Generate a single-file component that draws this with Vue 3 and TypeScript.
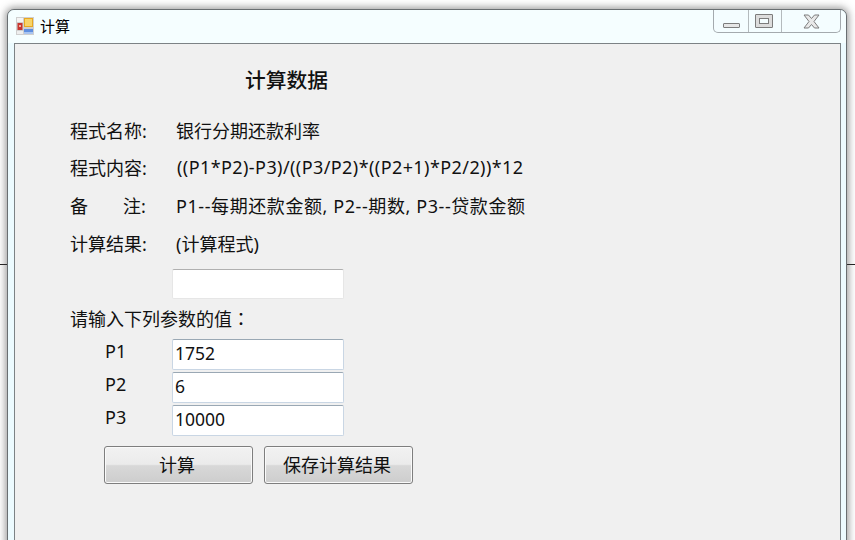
<script setup lang="ts">
const infoRows = [
  { label: '程式名称:', value: '银行分期还款利率', cls: '' },
  { label: '程式内容:', value: '((P1*P2)-P3)/((P3/P2)*((P2+1)*P2/2))*12', cls: 'track' },
  { label: '备注:', value: 'P1--每期还款金额, P2--期数, P3--贷款金额', cls: 'track-wide', spread: true },
  { label: '计算结果:', value: '(计算程式)', cls: '' },
]

const params = [
  { name: 'P1', value: '1752' },
  { name: 'P2', value: '6' },
  { name: 'P3', value: '10000' },
]
</script>

<template>
  <div class="desktop">
    <div class="back-line"></div>
    <div class="window">
      <div class="titlebar">
        <svg class="app-icon" width="18" height="18" viewBox="0 0 18 18">
          <rect x="0" y="0" width="18" height="18" fill="#cfcfcf" />
          <rect x="1" y="1" width="6" height="4" fill="#f4f4f4" />
          <rect x="1.5" y="6" width="5" height="7" fill="#c8352f" />
          <rect x="3" y="8" width="2" height="2" fill="#f0b0a0" />
          <rect x="1" y="14" width="6" height="3" fill="#eeeeee" />
          <rect x="8" y="1" width="9" height="9" fill="#e8a820" />
          <rect x="9" y="2" width="7" height="7" fill="#f8d468" />
          <rect x="8" y="12" width="9" height="5" fill="#5f8fe0" />
          <rect x="8" y="15" width="9" height="2" fill="#a8c4f0" />
        </svg>
        <span class="title">计算</span>
        <div class="controls">
          <div class="ctl ctl-min"><span class="min-glyph"></span></div>
          <div class="ctl ctl-max"><span class="max-glyph"></span></div>
          <div class="ctl ctl-close">
            <svg width="17" height="15" viewBox="0 0 17 15">
              <path
                d="M1 1H5.5L8.5 4.5L11.5 1H16L11 7.5L16 14H11.5L8.5 10.5L5.5 14H1L6 7.5Z"
                fill="#e8e8e8"
                stroke="#7c7c7c"
                stroke-width="1"
              />
            </svg>
          </div>
        </div>
      </div>

      <div class="client">
        <h1 class="heading">计算数据</h1>

        <div class="info">
          <div v-for="row in infoRows" :key="row.label" class="info-row">
            <span class="info-label" :class="{ spread: row.spread }">
              <template v-if="row.spread"><span>备</span><span>注:</span></template>
              <template v-else>{{ row.label }}</template>
            </span>
            <span class="info-value" :class="row.cls">{{ row.value }}</span>
          </div>
        </div>

        <div class="result-row">
          <div class="field field-plain"></div>
        </div>

        <div class="prompt">请输入下列参数的值<span class="colon">：</span></div>

        <div class="params">
          <div v-for="p in params" :key="p.name" class="param-row">
            <span class="param-name">{{ p.name }}</span>
            <div class="field">{{ p.value }}</div>
          </div>
        </div>

        <div class="actions">
          <button class="btn" type="button">计算</button>
          <button class="btn" type="button">保存计算结果</button>
        </div>
      </div>
    </div>
  </div>
</template>

<style>
html,
body {
  margin: 0;
  background: #ffffff;
}
</style>

<style scoped>
.desktop {
  position: relative;
  width: 855px;
  height: 540px;
  overflow: hidden;
  background: #ffffff;
  padding: 9px 8px 0 7px;
  box-sizing: border-box;
  font-family: 'Noto Sans', 'Noto Sans CJK SC', sans-serif;
  color: #111111;
}

.back-line {
  position: absolute;
  left: 0;
  right: 0;
  top: 264px;
  height: 1px;
  background: #222222;
}

.window {
  position: relative;
  height: 560px;
  box-sizing: border-box;
  border: 1px solid #6a6f72;
  border-radius: 7px 7px 0 0;
  background: #ecfbff;
  box-shadow: 0 0 7px 2px rgba(70, 70, 70, 0.5);
  padding: 0 5px 0 6px;
}

.titlebar {
  display: flex;
  align-items: flex-start;
  height: 33px;
  background: #f5feff;
  margin: 0 -5px 0 -6px;
  padding: 0 5px 0 8px;
  border-radius: 7px 7px 0 0;
}

.app-icon {
  margin-top: 7px;
}

.title {
  margin: 6px 0 0 6px;
  font-size: 15px;
  line-height: 20px;
  color: #000000;
}

.controls {
  display: flex;
  height: 22px;
  margin: 0 0 0 auto;
  border: 1px solid #a4aaae;
  border-top: none;
  border-radius: 0 0 5px 5px;
  background: #f4fdff;
}

.ctl {
  display: flex;
  align-items: center;
  justify-content: center;
  box-sizing: border-box;
  border-left: 1px solid #b4babd;
}

.ctl:first-child {
  border-left: none;
}

.ctl-min {
  width: 34px;
}

.ctl-max {
  width: 33px;
}

.ctl-close {
  width: 59px;
}

.min-glyph {
  display: block;
  box-sizing: border-box;
  width: 17px;
  height: 5px;
  margin-top: 8px;
  border: 1px solid #7c7c7c;
  border-radius: 1px;
  background: #e6e6e6;
}

.max-glyph {
  display: block;
  box-sizing: border-box;
  width: 18px;
  height: 14px;
  margin-left: -2px;
  border: 4px solid #dcdcdc;
  outline: 1px solid #7c7c7c;
  outline-offset: -1px;
  box-shadow: inset 0 0 0 1px #7c7c7c;
  border-radius: 1px;
  background: #f4fdff;
}

.client {
  height: 520px;
  box-sizing: border-box;
  border: 1px solid #7c8285;
  background: #f0f0f0;
  padding: 0 0 0 55px;
}

.heading {
  margin: 0;
  padding: 21px 0 0 175px;
  font-size: 20.75px;
  line-height: 30px;
  font-weight: 500;
  color: #111111;
}

.info {
  margin-top: 16px;
}

.info-row {
  display: flex;
  align-items: center;
  height: 37.6px;
  font-size: 18px;
}

.info-label {
  display: flex;
  width: 106px;
  flex: none;
}

.info-label.spread span:first-child {
  width: 53px;
}

.info-value {
  white-space: nowrap;
}

.track {
  margin-left: 1px;
  letter-spacing: 0.42px;
}

.track-wide {
  letter-spacing: 0.58px;
}

.result-row {
  padding: 8px 0 0 102px;
}

.field {
  box-sizing: border-box;
  width: 172px;
  height: 31px;
  border: 1px solid #c9d6e4;
  border-top-color: #9aa8b4;
  border-radius: 2px;
  background: #ffffff;
  padding-left: 2px;
  font-size: 17.5px;
  line-height: 27px;
}

.field-plain {
  height: 30px;
  border-color: #e6e6e6;
  border-top-color: #b0b0b0;
}

.prompt {
  height: 40px;
  font-size: 18px;
  line-height: 38px;
}

.colon {
  font-family: 'Noto Sans CJK TC', sans-serif;
}

.params {
  display: flex;
  flex-direction: column;
  gap: 2px;
}

.param-row {
  display: flex;
  align-items: flex-start;
  padding-left: 35px;
}

.param-name {
  width: 67px;
  font-size: 18px;
  line-height: 24px;
}

.actions {
  display: flex;
  gap: 11px;
  padding: 10px 0 0 34px;
}

.btn {
  width: 149px;
  height: 38px;
  padding: 0 3px 2px 0;
  border: 1px solid #7e7e7e;
  border-radius: 3px;
  background: linear-gradient(#f2f2f2 0%, #ebebeb 48%, #d8d8d8 52%, #cdcdcd 100%);
  box-shadow: inset 0 0 0 1px #fafafa;
  font-family: inherit;
  font-size: 18px;
  color: #111111;
}
</style>
